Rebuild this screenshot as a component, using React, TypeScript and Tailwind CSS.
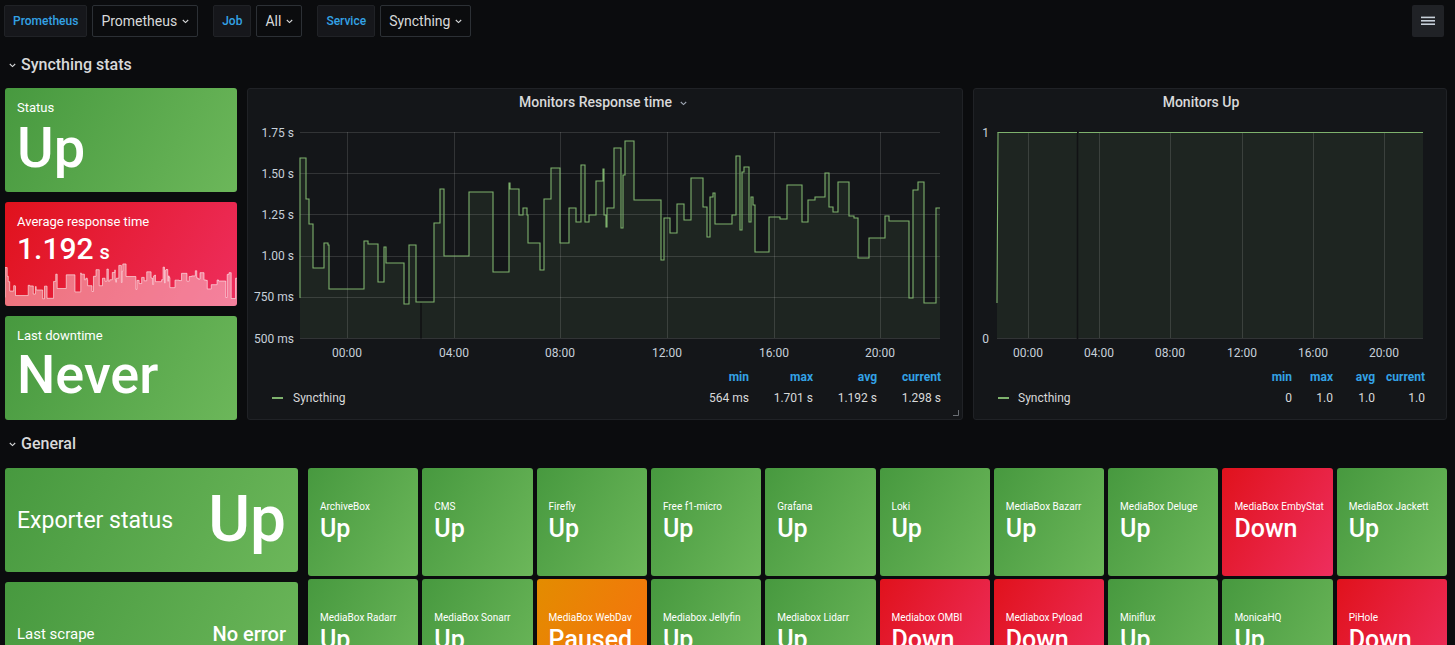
import React from "react";

type P = [number, number];

const RESP: P[] = [
  [300, 298], [300, 158], [306, 199], [309, 224], [313, 268], [324, 243], [328, 245], [329, 289],
  [364, 241], [368, 244], [378, 282], [384, 247], [386, 263], [404, 304], [409, 245], [416, 302],
  [434, 223], [440, 189], [444, 256], [469, 192], [493, 272], [509, 183], [510, 189], [519, 215],
  [523, 208], [527, 215], [528, 243], [540, 270], [544, 199], [551, 168], [560, 243], [569, 208],
  [576, 222], [581, 165], [585, 222], [589, 215], [596, 181], [603, 169], [604, 215], [606, 227],
  [607, 208], [614, 148], [621, 228], [623, 175], [625, 141], [634, 200], [661, 260], [664, 218],
  [670, 233], [677, 204], [684, 220], [691, 178], [703, 207], [707, 237], [710, 197], [713, 193],
  [715, 224], [732, 215], [736, 156], [740, 230], [742, 172], [744, 167], [749, 222], [751, 197],
  [753, 205], [755, 252], [769, 217], [780, 219], [787, 185], [802, 222], [808, 200], [815, 197],
  [825, 173], [829, 207], [833, 212], [838, 182], [849, 216], [854, 218], [858, 258], [869, 238],
  [885, 216], [889, 221], [909, 298], [913, 190], [918, 182], [924, 303], [936, 208],
];

function stepPath(pts: P[], endX: number) {
  let d = `M${pts[0][0]} ${pts[0][1]}`;
  for (let i = 1; i < pts.length; i++) {
    const [x, y] = pts[i];
    if (x !== pts[i - 1][0]) d += ` H${x}`;
    d += ` V${y}`;
  }
  d += ` H${endX}`;
  return d;
}

const LINE = stepPath(RESP, 940);
const FILL = `${LINE} V338 H300 Z`;

const GREEN = "bg-[linear-gradient(120deg,#47993f,#6cb75a)]";
const RED = "bg-[linear-gradient(120deg,#e0121c,#ee2e5e)]";
const ORANGE = "bg-[linear-gradient(120deg,#e38c00,#f8700f)]";

function Chevron({ className = "" }: { className?: string }) {
  return (
    <svg width="7" height="5" viewBox="0 0 7 5" className={className}>
      <path d="M0.8 1 L3.5 3.6 L6.2 1" fill="none" stroke="currentColor" strokeWidth="1.1" />
    </svg>
  );
}

function VarLabel({ children }: { children: React.ReactNode }) {
  return (
    <div className="h-[32px] px-[8px] flex items-center bg-[#16171b] border border-[#202226] rounded-[2px] text-[12px] font-medium text-[#33a2e5]">
      {children}
    </div>
  );
}

function VarSelect({ children }: { children: React.ReactNode }) {
  return (
    <div className="h-[32px] pl-[8px] pr-[8px] flex items-center gap-[5px] border border-[#2c3035] rounded-[2px] text-[14px] text-[#d8d9da]">
      <span>{children}</span>
      <Chevron className="mt-[1px]" />
    </div>
  );
}

function SectionHeader({ title, h }: { title: string; h: string }) {
  return (
    <div className={`${h} flex items-center pl-[9px] gap-[5px] text-[16px] leading-none font-medium text-[#d8d9da]`}>
      <Chevron className="mt-[1px]" />
      <span>{title}</span>
    </div>
  );
}

function Tile({ name, value, color }: { name: string; value: string; color: string }) {
  return (
    <div className={`h-[108px] rounded-[3px] ${color} flex flex-col justify-center gap-[3px] pl-[12px] pb-[2px] text-white`}>
      <div className="text-[10px] leading-[12px]">{name}</div>
      <div className="text-[25px] leading-none font-medium">{value}</div>
    </div>
  );
}

const ROW1: [string, string, string][] = [
  ["ArchiveBox", "Up", GREEN],
  ["CMS", "Up", GREEN],
  ["Firefly", "Up", GREEN],
  ["Free f1-micro", "Up", GREEN],
  ["Grafana", "Up", GREEN],
  ["Loki", "Up", GREEN],
  ["MediaBox Bazarr", "Up", GREEN],
  ["MediaBox Deluge", "Up", GREEN],
  ["MediaBox EmbyStat", "Down", RED],
  ["MediaBox Jackett", "Up", GREEN],
];
const ROW2: [string, string, string][] = [
  ["MediaBox Radarr", "Up", GREEN],
  ["MediaBox Sonarr", "Up", GREEN],
  ["MediaBox WebDav", "Paused", ORANGE],
  ["Mediabox Jellyfin", "Up", GREEN],
  ["Mediabox Lidarr", "Up", GREEN],
  ["Mediabox OMBI", "Down", RED],
  ["Mediabox Pyload", "Down", RED],
  ["Miniflux", "Up", GREEN],
  ["MonicaHQ", "Up", GREEN],
  ["PiHole", "Down", RED],
];

const GRID = "rgba(255,255,255,0.13)";
const TICK = "#c7d0d9";

function ResponseChart() {
  const ys: [number, string][] = [
    [132, "1.75 s"], [173.2, "1.50 s"], [214.4, "1.25 s"], [255.6, "1.00 s"], [296.8, "750 ms"], [338, "500 ms"],
  ];
  const xs: [number, string][] = [
    [347, "00:00"], [454, "04:00"], [560, "08:00"], [667, "12:00"], [774, "16:00"], [880, "20:00"],
  ];
  return (
    <svg width={714} height={254} viewBox="248 115 714 254" className="block">
      <path d={FILL} fill="rgba(126,178,109,0.1)" />
      {ys.map(([y]) => (
        <line key={y} x1={300} x2={940} y1={Math.round(y) + 0.5} y2={Math.round(y) + 0.5} stroke={GRID} />
      ))}
      {xs.map(([x]) => (
        <line key={x} x1={x + 0.5} x2={x + 0.5} y1={132} y2={338} stroke={GRID} />
      ))}
      <line x1={421} x2={421} y1={303} y2={338.5} stroke="#111214" strokeWidth={1.6} />
      <path d={LINE} fill="none" stroke="#7eb26d" strokeWidth={1.1} />
      {ys.map(([y, t]) => (
        <text key={t} x={294} y={y + 0.5} textAnchor="end" dominantBaseline="central" fontSize={12} fill={TICK}>
          {t}
        </text>
      ))}
      {xs.map(([x, t]) => (
        <text key={t} x={x} y={352.5} textAnchor="middle" dominantBaseline="central" fontSize={12} fill={TICK}>
          {t}
        </text>
      ))}
    </svg>
  );
}

function UpChart() {
  const xs: [number, string][] = [
    [1028, "00:00"], [1099, "04:00"], [1170, "08:00"], [1242, "12:00"], [1313, "16:00"], [1384, "20:00"],
  ];
  return (
    <svg width={472} height={254} viewBox="974 115 472 254" className="block">
      <path d="M997 303 L998 132.5 H1423 V338 H997 Z" fill="rgba(126,178,109,0.1)" />
      <line x1={997} x2={1423} y1={132.5} y2={132.5} stroke={GRID} />
      <line x1={997} x2={1423} y1={338.5} y2={338.5} stroke={GRID} />
      {xs.map(([x]) => (
        <line key={x} x1={x + 0.5} x2={x + 0.5} y1={132} y2={338} stroke={GRID} />
      ))}
      <line x1={1077.5} x2={1077.5} y1={131} y2={339} stroke="#111214" strokeWidth={1.6} />
      <path d="M997 303 L998 132.5 H1077 M1079 132.5 H1423" fill="none" stroke="#7eb26d" strokeWidth={1.1} />
      <text x={989} y={132.5} textAnchor="end" dominantBaseline="central" fontSize={12} fill={TICK}>1</text>
      <text x={989} y={338.5} textAnchor="end" dominantBaseline="central" fontSize={12} fill={TICK}>0</text>
      {xs.map(([x, t]) => (
        <text key={t} x={x} y={352.5} textAnchor="middle" dominantBaseline="central" fontSize={12} fill={TICK}>
          {t}
        </text>
      ))}
    </svg>
  );
}

function LegendDash() {
  return <span className="w-[11px] h-[1.5px] bg-[#7eb26d] inline-block" />;
}

export default function App() {
  return (
    <div className="w-[1455px] h-[645px] overflow-hidden bg-[#0b0c0e] font-['Roboto',sans-serif] text-[#d8d9da]">
      {/* Top variable bar */}
      <div className="h-[41px] flex items-start pt-[5px] pl-[4px] pr-[11px]">
        <div className="flex gap-[15px]">
          <div className="flex gap-[5px]">
            <VarLabel>Prometheus</VarLabel>
            <VarSelect>Prometheus</VarSelect>
          </div>
          <div className="flex gap-[5px]">
            <VarLabel>Job</VarLabel>
            <VarSelect>All</VarSelect>
          </div>
          <div className="flex gap-[5px]">
            <VarLabel>Service</VarLabel>
            <VarSelect>Syncthing</VarSelect>
          </div>
        </div>
        <div className="ml-auto w-[32px] h-[32px] rounded-[2px] bg-[#202226] flex items-center justify-center">
          <svg width="14" height="10" viewBox="0 0 14 10">
            <rect x="0" y="0.6" width="14" height="1.6" fill="#c7d0d9" />
            <rect x="0" y="4" width="14" height="1.6" fill="#c7d0d9" />
            <rect x="0" y="7.4" width="14" height="1.6" fill="#c7d0d9" />
          </svg>
        </div>
      </div>

      <SectionHeader title="Syncthing stats" h="h-[47px]" />

      {/* Syncthing stats row */}
      <div className="flex gap-[10px] px-[5px] h-[332px]">
        <div className="w-[232px] flex flex-col gap-[10px]">
          <div className={`h-[104px] rounded-[3px] ${GREEN} px-[12px] pt-[12px] text-white`}>
            <div className="text-[13px] leading-[16px]">Status</div>
            <div className="mt-[4px] text-[56px] leading-none font-medium">Up</div>
          </div>
          <div className={`relative h-[104px] rounded-[3px] overflow-hidden ${RED} text-white`}>
            <svg
              className="absolute left-0 bottom-0 w-full h-[44px]"
              viewBox="300 132 640 206"
              preserveAspectRatio="none"
            >
              <path d={FILL} fill="rgba(255,255,255,0.4)" />
              <path d={LINE} fill="none" stroke="rgba(255,255,255,0.55)" strokeWidth={1} vectorEffect="non-scaling-stroke" />
            </svg>
            <div className="relative px-[12px] pt-[12px]">
              <div className="text-[13px] leading-[16px]">Average response time</div>
              <div className="mt-[4px] flex items-baseline font-medium">
                <span className="text-[30px] leading-none">1.192</span>
                <span className="text-[20px] leading-none ml-[6px]">s</span>
              </div>
            </div>
          </div>
          <div className={`h-[104px] rounded-[3px] ${GREEN} px-[12px] pt-[12px] text-white`}>
            <div className="text-[13px] leading-[16px]">Last downtime</div>
            <div className="mt-[4px] text-[54px] leading-none font-medium">Never</div>
          </div>
        </div>

        {/* Monitors Response time */}
        <div className="relative w-[716px] h-[332px] rounded-[3px] bg-[#141619] border border-[#202226] flex flex-col">
          <div className="h-[26px] flex items-center justify-center gap-[8px] pr-[4px] text-[14px] font-medium text-[#d8d9da]">
            <span>Monitors Response time</span>
            <Chevron className="text-[#9fa7b3] mt-[2px]" />
          </div>
          <ResponseChart />
          <div className="pl-[24px] pr-[21px] text-[12px] leading-[16px]">
            <div className="flex justify-end font-bold text-[#33a2e5]">
              <span className="w-[64px] text-right">min</span>
              <span className="w-[64px] text-right">max</span>
              <span className="w-[64px] text-right">avg</span>
              <span className="w-[64px] text-right">current</span>
            </div>
            <div className="flex mt-[5px] text-[#d8d9da]">
              <div className="flex-1 flex items-center gap-[10px]">
                <LegendDash />
                <span>Syncthing</span>
              </div>
              <span className="w-[64px] text-right">564 ms</span>
              <span className="w-[64px] text-right">1.701 s</span>
              <span className="w-[64px] text-right">1.192 s</span>
              <span className="w-[64px] text-right">1.298 s</span>
            </div>
          </div>
          <svg className="absolute right-[3px] bottom-[3px]" width="6" height="6" viewBox="0 0 6 6">
            <path d="M5.5 0 V5.5 H0" fill="none" stroke="#6b6f75" strokeWidth="1" />
          </svg>
        </div>

        {/* Monitors Up */}
        <div className="w-[474px] h-[332px] rounded-[3px] bg-[#141619] border border-[#202226] flex flex-col">
          <div className="h-[26px] flex items-center justify-center pr-[18px] text-[14px] font-medium text-[#d8d9da]">
            Monitors Up
          </div>
          <UpChart />
          <div className="pl-[24px] pr-[21px] text-[12px] leading-[16px]">
            <div className="flex justify-end font-bold text-[#33a2e5]">
              <span className="w-[41px] text-right">min</span>
              <span className="w-[41px] text-right">max</span>
              <span className="w-[42px] text-right">avg</span>
              <span className="w-[50px] text-right">current</span>
            </div>
            <div className="flex mt-[5px] text-[#d8d9da]">
              <div className="flex-1 flex items-center gap-[9px]">
                <LegendDash />
                <span>Syncthing</span>
              </div>
              <span className="w-[41px] text-right">0</span>
              <span className="w-[41px] text-right">1.0</span>
              <span className="w-[42px] text-right">1.0</span>
              <span className="w-[50px] text-right">1.0</span>
            </div>
          </div>
        </div>
      </div>

      <SectionHeader title="General" h="h-[48px]" />

      {/* General row */}
      <div className="flex gap-[10px] px-[5px]">
        <div className="w-[293px] flex flex-col gap-[10px]">
          <div className={`h-[104px] rounded-[3px] ${GREEN} flex items-center justify-between px-[12px] text-white`}>
            <span className="text-[23px] leading-none">Exporter status</span>
            <span className="text-[64px] leading-none font-medium">Up</span>
          </div>
          <div className={`h-[104px] rounded-[3px] ${GREEN} flex items-center justify-between px-[12px] text-white`}>
            <span className="text-[15px] leading-none">Last scrape</span>
            <span className="text-[20px] leading-none font-medium">No error</span>
          </div>
        </div>
        <div className="w-[1139px] grid grid-cols-10 gap-x-[4px] gap-y-[3px]">
          {ROW1.map(([n, v, c]) => (
            <Tile key={n} name={n} value={v} color={c} />
          ))}
          {ROW2.map(([n, v, c]) => (
            <Tile key={n} name={n} value={v} color={c} />
          ))}
        </div>
      </div>
    </div>
  );
}
